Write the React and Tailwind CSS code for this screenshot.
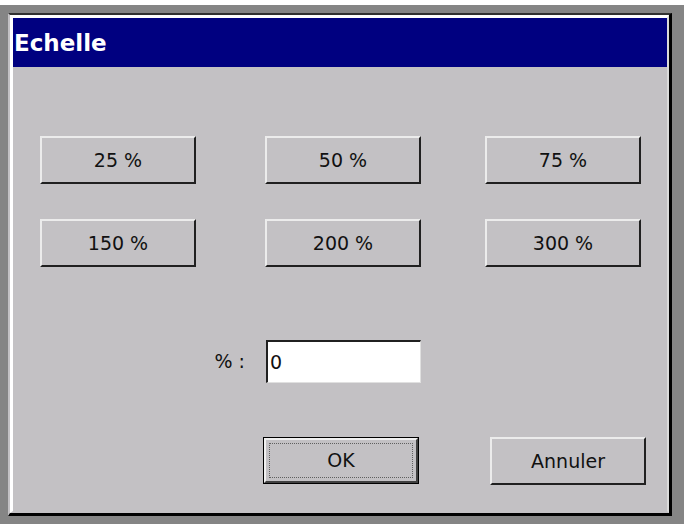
import React from 'react';

const font = { fontFamily: '"DejaVu Sans", Tahoma, sans-serif' };

function Btn({ children, def }) {
  if (def) {
    return (
      <button className="w-[156px] h-[47px] bg-[#c3c1c4] border border-black p-0">
        <div className="h-full border-t-2 border-l-2 border-t-[#f0f0f0] border-l-[#f0f0f0] border-r-2 border-b-2 border-r-[#404040] border-b-[#404040] p-[3px]">
          <div className="h-full border border-dotted border-[#606060] flex items-center justify-center text-[19px] text-[#111]">
            {children}
          </div>
        </div>
      </button>
    );
  }
  return (
    <button className="w-[156px] h-[48px] bg-[#c3c1c4] border-t-2 border-l-2 border-t-[#ececec] border-l-[#ececec] border-r-2 border-b-2 border-r-[#202020] border-b-[#202020] flex items-center justify-center text-[19px] text-[#111]">
      {children}
    </button>
  );
}

export default function App() {
  const rows = [
    ['25 %', '50 %', '75 %'],
    ['150 %', '200 %', '300 %'],
  ];
  return (
    <div className="w-[684px] h-[524px] bg-[#858585] border-t-[5px] border-white pt-[8px] pl-[8px] pr-[12px] pb-[8px]" style={font}>
      <div className="h-full border-t-2 border-t-[#303030] border-l-2 border-l-[#c3c1c4] border-r-[3px] border-r-black border-b-[3px] border-b-black">
        <div className="h-full flex flex-col border-t-[3px] border-l-[3px] border-t-white border-l-white border-r-2 border-r-[#dadada] border-b-2 border-b-[#c3c1c4] bg-[#c3c1c4]">
          <div className="h-[49px] bg-[#000080] text-white font-bold text-[23px] flex items-center pl-[1px] pt-[2px]">
            Echelle
          </div>
          <div className="flex-1 pt-[69px] pl-[27px]">
            <div className="flex flex-col gap-[35px]">
              {rows.map((r, i) => (
                <div key={i} className="flex">
                  <Btn>{r[0]}</Btn>
                  <div className="ml-[69px]"><Btn>{r[1]}</Btn></div>
                  <div className="ml-[64px]"><Btn>{r[2]}</Btn></div>
                </div>
              ))}
            </div>
            <div className="flex items-center mt-[73px]">
              <span className="w-[226px] text-right pr-[21px] text-[19px] text-[#111]">% :</span>
              <div className="w-[155px] h-[43px] bg-white border-t-2 border-l-2 border-t-[#202020] border-l-[#202020] border-r border-b border-r-[#e0e0e0] border-b-[#e0e0e0] flex items-center pl-[2px] text-[19px] text-[#111]">
                0
              </div>
            </div>
            <div className="flex mt-[54px] pl-[223px] gap-[71px]">
              <Btn def>OK</Btn>
              <Btn>Annuler</Btn>
            </div>
          </div>
        </div>
      </div>
    </div>
  );
}
